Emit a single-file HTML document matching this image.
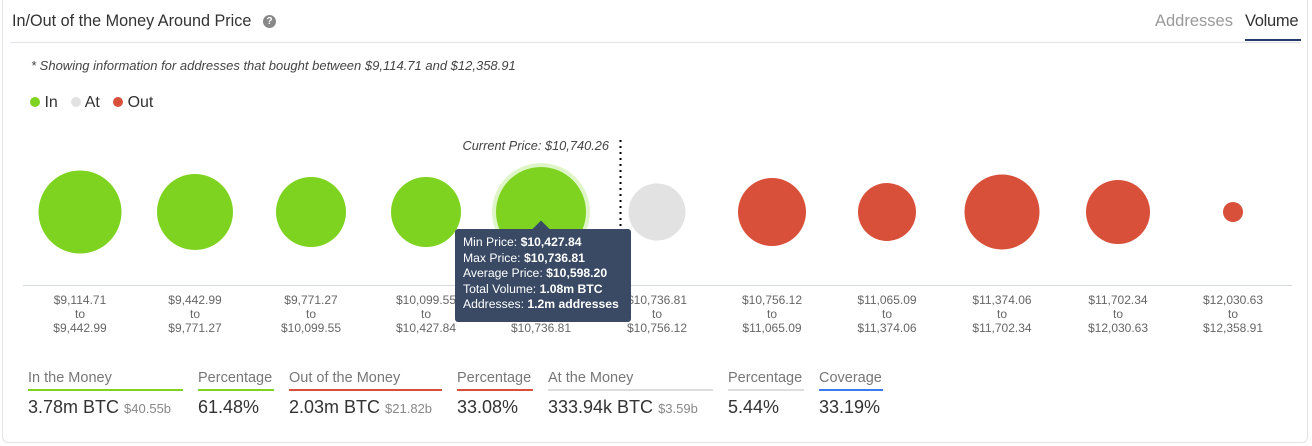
<!DOCTYPE html>
<html><head><style>
*{margin:0;padding:0;box-sizing:border-box}
body{width:1312px;height:446px;background:#fff;font-family:"Liberation Sans",sans-serif;position:relative;overflow:hidden;color:#333}
.card{position:absolute;left:2px;top:-4px;width:1306px;height:447px;border:1px solid #e3e3e3;border-radius:6px}
.abs{position:absolute;white-space:nowrap}
.lab{position:absolute;width:120px;text-align:center;font-size:12px;line-height:14px;color:#666;top:293px}
.st{position:absolute;top:370px}
.st .l{font-size:14.5px;color:#777;padding-bottom:2px;border-bottom:2px solid #ccc;height:21px}
.st .v{font-size:18px;color:#333;margin-top:6px}
.st .v small{font-size:13px;color:#888}
</style></head><body>
<div class="card"></div>
<div class="abs" style="left:12px;top:12px;font-size:16.2px;color:#333">In/Out of the Money Around Price</div>
<div class="abs" style="left:263px;top:15px;width:13px;height:13px;border-radius:50%;background:#888;color:#fff;font-size:10px;font-weight:bold;text-align:center;line-height:13px">?</div>
<div class="abs" style="left:1155px;top:12px;font-size:16.5px;color:#999">Addresses</div>
<div class="abs" style="left:1245px;top:12px;font-size:16.5px;color:#333;letter-spacing:-0.3px">Volume</div>
<div class="abs" style="left:1245px;top:39px;width:56px;height:2px;background:#243a6b"></div>
<div class="abs" style="left:10px;top:42px;width:1290px;height:1px;background:#e0e4ea"></div>
<div class="abs" style="left:31px;top:58px;font-size:13px;font-style:italic;color:#444">* Showing information for addresses that bought between $9,114.71 and $12,358.91</div>
<div class="abs" style="left:30px;top:94px;font-size:16px;color:#333">
<span style="display:inline-block;width:10px;height:10px;border-radius:50%;background:#7ed321"></span> In&nbsp;&nbsp;
<span style="display:inline-block;width:10px;height:10px;border-radius:50%;background:#e2e2e2"></span> At&nbsp;&nbsp;
<span style="display:inline-block;width:10px;height:10px;border-radius:50%;background:#d9503a"></span> Out</div>
<div class="abs" style="left:400px;top:138px;width:209px;text-align:right;font-size:12.8px;font-style:italic;color:#444">Current Price: $10,740.26</div>
<svg class="abs" style="left:0;top:0" width="1312" height="446">
<line x1="620.5" y1="140" x2="620.5" y2="232" stroke="#000" stroke-width="2" stroke-dasharray="2,4"/>
<circle cx="80" cy="212" r="41.5" fill="#7ed321"/>
<circle cx="195" cy="212" r="38" fill="#7ed321"/>
<circle cx="311" cy="212" r="35" fill="#7ed321"/>
<circle cx="426" cy="212" r="35" fill="#7ed321"/>
<circle cx="541" cy="212" r="49" fill="#dff5c8"/>
<circle cx="541" cy="212" r="45" fill="#7ed321"/>
<circle cx="657" cy="212" r="28.5" fill="#e2e2e2"/>
<circle cx="772" cy="212" r="34" fill="#d9503a"/>
<circle cx="887" cy="212" r="29" fill="#d9503a"/>
<circle cx="1002" cy="212" r="37.5" fill="#d9503a"/>
<circle cx="1118" cy="212" r="32" fill="#d9503a"/>
<circle cx="1233" cy="212" r="10" fill="#d9503a"/>
<line x1="23" y1="285.5" x2="1292" y2="285.5" stroke="#d5d9e0"/>
</svg>
<div class="lab" style="left:20px">$9,114.71<br>to<br>$9,442.99</div>
<div class="lab" style="left:135px">$9,442.99<br>to<br>$9,771.27</div>
<div class="lab" style="left:251px">$9,771.27<br>to<br>$10,099.55</div>
<div class="lab" style="left:366px">$10,099.55<br>to<br>$10,427.84</div>
<div class="lab" style="left:481px">$10,427.84<br>to<br>$10,736.81</div>
<div class="lab" style="left:597px">$10,736.81<br>to<br>$10,756.12</div>
<div class="lab" style="left:712px">$10,756.12<br>to<br>$11,065.09</div>
<div class="lab" style="left:827px">$11,065.09<br>to<br>$11,374.06</div>
<div class="lab" style="left:942px">$11,374.06<br>to<br>$11,702.34</div>
<div class="lab" style="left:1058px">$11,702.34<br>to<br>$12,030.63</div>
<div class="lab" style="left:1173px">$12,030.63<br>to<br>$12,358.91</div>
<div class="abs" style="left:535px;top:223px;width:12px;height:12px;background:#3a4a65;transform:rotate(45deg)"></div>
<div class="abs" style="left:455px;top:229px;width:176px;height:93px;background:#3a4a65;border-radius:3px;color:#fff;font-size:12.2px;line-height:15.5px;padding:6px 8px">
Min Price: <b>$10,427.84</b><br>Max Price: <b>$10,736.81</b><br>Average Price: <b>$10,598.20</b><br>Total Volume: <b>1.08m BTC</b><br>Addresses: <b>1.2m addresses</b></div>
<div class="st" style="left:28px;width:155px"><div class="l" style="border-color:#7ed321">In the Money</div><div class="v">3.78m BTC <small>$40.55b</small></div></div>
<div class="st" style="left:198px;width:76px"><div class="l" style="border-color:#7ed321">Percentage</div><div class="v">61.48%</div></div>
<div class="st" style="left:289px;width:153px"><div class="l" style="border-color:#d9503a">Out of the Money</div><div class="v">2.03m BTC <small>$21.82b</small></div></div>
<div class="st" style="left:457px;width:76px"><div class="l" style="border-color:#d9503a">Percentage</div><div class="v">33.08%</div></div>
<div class="st" style="left:548px;width:165px"><div class="l" style="border-color:#ddd">At the Money</div><div class="v">333.94k BTC <small>$3.59b</small></div></div>
<div class="st" style="left:728px;width:76px"><div class="l" style="border-color:#ddd">Percentage</div><div class="v">5.44%</div></div>
<div class="st" style="left:819px;width:64px"><div class="l" style="border-color:#3a7bf0">Coverage</div><div class="v">33.19%</div></div>
</body></html>
